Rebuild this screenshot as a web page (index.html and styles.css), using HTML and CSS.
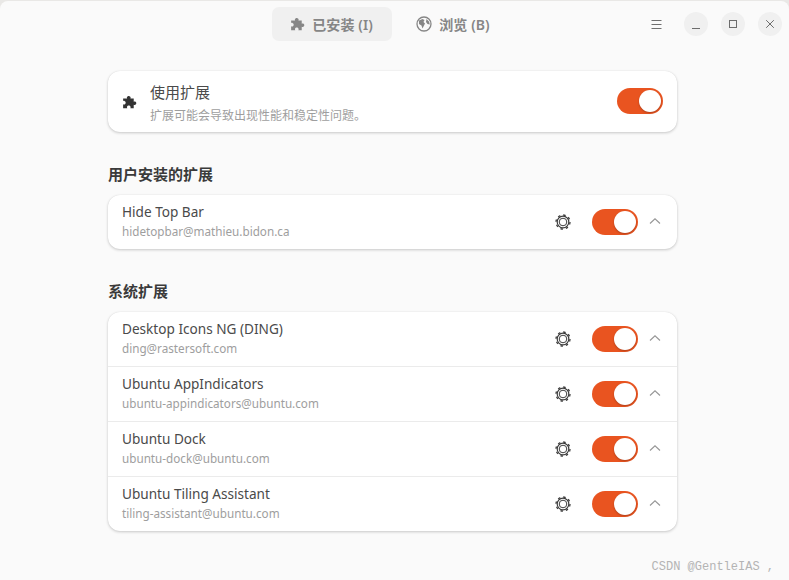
FILE: index.html
```html
<!DOCTYPE html>
<html lang="zh-CN">
<head>
<meta charset="utf-8">
<title>扩展</title>
<link rel="stylesheet" href="styles.css">
</head>
<body>
<svg class="defs" width="0" height="0" aria-hidden="true">
  <symbol id="puzzle" viewBox="0 0 16 16"><path d="M6.2 1.2c1.3-.7 3 .2 3 1.6 0 .4-.1.7-.3 1h3.6v3.4c.4-.3.8-.4 1.2-.3 1.400.2 2 1.800 1.200 2.900-.6.800-1.600 1-2.400.5v3.700H8.900c.3-.5.4-1 .2-1.500-.4-1.200-2-1.700-3-1-.8.500-1 1.600-.5 2.500H1.200V9.800c.7.400 1.600.3 2.200-.3 1-1 .6-2.800-.8-3.200-.5-.1-1 0-1.400.2V3.800h4.300c-.6-.9-.3-2 .7-2.600z"/></symbol>
  <symbol id="gear" viewBox="0 0 16 16"><circle cx="8" cy="8" r="5.800" fill="none" stroke="currentColor" stroke-width="1.200"/><circle cx="8" cy="8" r="7" fill="none" stroke="currentColor" stroke-width="1.300" stroke-dasharray="2.500 3"/><circle cx="8" cy="8" r="3.800" fill="none" stroke="currentColor" stroke-width="1"/></symbol>
  <symbol id="chev" viewBox="0 0 12 8"><path d="M1 6.500 6 1.800l5 4.700" fill="none" stroke="currentColor" stroke-width="1.100"/></symbol>
</svg>
<div class="window">
  <header class="header">
    <nav class="tabs">
      <div class="tab tab-active"><svg class="tab-icon"><use href="#puzzle"/></svg><span>已安装 (I)</span></div>
      <div class="tab">
        <svg class="tab-icon tab-globe" viewBox="0 0 16 16"><circle cx="8" cy="8" r="7" fill="none" stroke="currentColor" stroke-width="1.300"/><path d="M3 4.500 6.500 3l2 1-1 2 1.500 1.500-1 2-1.500 3-1-3-2.500-1.500zM10.500 3l2.500 2.500.8 3-2.300-.5-1.500-2z"/></svg>
        <span>浏览 (B)</span>
      </div>
    </nav>
    <div class="controls">
      <svg class="menu" viewBox="0 0 11 9"><path d="M.5 .5h10M.5 4.500h10M.5 8.500h10" fill="none" stroke="currentColor"/></svg>
      <div class="wbtn"><svg viewBox="0 0 10 10"><path d="M1 9.500h8" stroke="currentColor" fill="none"/></svg></div>
      <div class="wbtn"><svg viewBox="0 0 10 10"><rect x="1.500" y="1.500" width="7" height="7" stroke="currentColor" fill="none"/></svg></div>
      <div class="wbtn"><svg viewBox="0 0 10 10"><path d="M1.200 1.200l7.600 7.600M8.800 1.200l-7.600 7.600" stroke="currentColor" fill="none"/></svg></div>
    </div>
  </header>
  <main class="content">
    <section class="card card-top">
      <svg class="use-icon"><use href="#puzzle"/></svg>
      <div class="info info-top">
        <div class="title title-zh">使用扩展</div>
        <div class="sub sub-zh">扩展可能会导致出现性能和稳定性问题。</div>
      </div>
      <div class="switch switch-top"></div>
    </section>

    <h2 class="heading">用户安装的扩展</h2>
    <section class="card">
      <div class="row row-single">
        <div class="info"><div class="title">Hide Top Bar</div><div class="sub">hidetopbar@mathieu.bidon.ca</div></div>
        <svg class="gear"><use href="#gear"/></svg><div class="switch"></div><svg class="chev"><use href="#chev"/></svg>
      </div>
    </section>

    <h2 class="heading">系统扩展</h2>
    <section class="card">
      <div class="row">
        <div class="info"><div class="title">Desktop Icons NG (DING)</div><div class="sub">ding@rastersoft.com</div></div>
        <svg class="gear"><use href="#gear"/></svg><div class="switch"></div><svg class="chev"><use href="#chev"/></svg>
      </div>
      <div class="row">
        <div class="info"><div class="title">Ubuntu AppIndicators</div><div class="sub">ubuntu-appindicators@ubuntu.com</div></div>
        <svg class="gear"><use href="#gear"/></svg><div class="switch"></div><svg class="chev"><use href="#chev"/></svg>
      </div>
      <div class="row">
        <div class="info"><div class="title">Ubuntu Dock</div><div class="sub">ubuntu-dock@ubuntu.com</div></div>
        <svg class="gear"><use href="#gear"/></svg><div class="switch"></div><svg class="chev"><use href="#chev"/></svg>
      </div>
      <div class="row">
        <div class="info"><div class="title">Ubuntu Tiling Assistant</div><div class="sub">tiling-assistant@ubuntu.com</div></div>
        <svg class="gear"><use href="#gear"/></svg><div class="switch"></div><svg class="chev"><use href="#chev"/></svg>
      </div>
    </section>
  </main>
  <div class="watermark">CSDN @GentleIAS ,</div>
</div>
</body>
</html>
```
FILE: styles.css
```css
* { box-sizing: border-box; }
html, body { margin: 0; padding: 0; }
body {
  width: 789px;
  height: 580px;
  overflow: hidden;
  background: #e9e8e6;
  font-family: "Noto Sans", "Noto Sans CJK SC", sans-serif;
  color: #3d3d3d;
}
.defs { position: absolute; }
.window {
  position: relative;
  height: 580px;
  margin-top: 1px;
  background: #fafafa;
  border-top-right-radius: 8px;
  border-top-left-radius: 8px;
}
.header {
  position: relative;
  height: 46px;
  display: flex;
  justify-content: center;
  align-items: center;
}
.tabs { display: flex; margin-left: -6px; }
.tab {
  display: flex;
  align-items: center;
  justify-content: center;
  gap: 7px;
  width: 120px;
  height: 34px;
  border-radius: 7px;
  color: #868686;
  font-size: 14px;
  font-weight: 600;
  letter-spacing: .1px;
}
.tab-active { background: #f0f0f0; }
.tab-icon { width: 15px; height: 15px; fill: currentColor; }
.tab-globe { width: 16px; height: 16px; margin-left: 3px; }
.controls {
  position: absolute;
  right: 7px;
  top: 11px;
  display: flex;
  align-items: center;
  gap: 13px;
}
.menu { width: 11px; height: 9px; color: #707070; margin-right: 9px; }
.wbtn {
  width: 24px;
  height: 24px;
  border-radius: 50%;
  background: #f0f0f0;
  display: flex;
  align-items: center;
  justify-content: center;
  color: #6c6c6c;
}
.wbtn svg { width: 10px; height: 10px; }
.content { width: 569px; margin: 24px 0 0 108px; }
.card {
  background: #fff;
  border-radius: 12px;
  box-shadow: 0 1px 3px rgba(0,0,0,.2), 0 0 1px rgba(0,0,0,.1);
}
.card-top {
  height: 61px;
  display: flex;
  align-items: center;
  padding: 0 14px;
}
.use-icon { width: 15px; height: 15px; fill: #333; margin-right: 13px; margin-top: 1px; }
.info { flex: 1; min-width: 0; padding-bottom: 3px; }
.info-top { padding: 3px 0 0; }
.title { font-size: 13.600px; line-height: 20px; color: #4a4a4a; }
.title-zh { font-size: 15px; }
.sub { font-size: 11.700px; line-height: 16px; margin-top: 1px; color: #9e9e9e; }
.sub-zh { font-size: 12px; margin-top: 6px; }
.heading {
  margin: 32px 0 11px;
  font-size: 15px;
  line-height: 20px;
  font-weight: 700;
  color: #3a3a3a;
}
.row {
  height: 55px;
  display: flex;
  align-items: center;
  padding: 0 16px 0 14px;
  border-bottom: 1px solid #ebebeb;
}
.row:last-child { border-bottom: 0; height: 54px; }
.gear { width: 16px; height: 16px; color: #3d3d3d; margin-right: 21px; }
.switch {
  position: relative;
  width: 46px;
  height: 26px;
  border-radius: 13px;
  background: #e95420;
  flex: none;
}
.switch-top { margin-bottom: 1px; }
.switch::after {
  content: "";
  position: absolute;
  right: 2px;
  top: 2px;
  width: 22px;
  height: 22px;
  border-radius: 50%;
  background: #fff;
  box-shadow: 0 1px 2px rgba(0,0,0,.25);
}
.chev { width: 12px; height: 8px; color: #969696; margin-left: 11px; margin-bottom: 2px; }
.watermark {
  position: absolute;
  right: 15px;
  top: 558px;
  font-family: "Liberation Mono", monospace;
  font-size: 12px;
  color: #b4b4b4;
  line-height: 16px;
}
```
